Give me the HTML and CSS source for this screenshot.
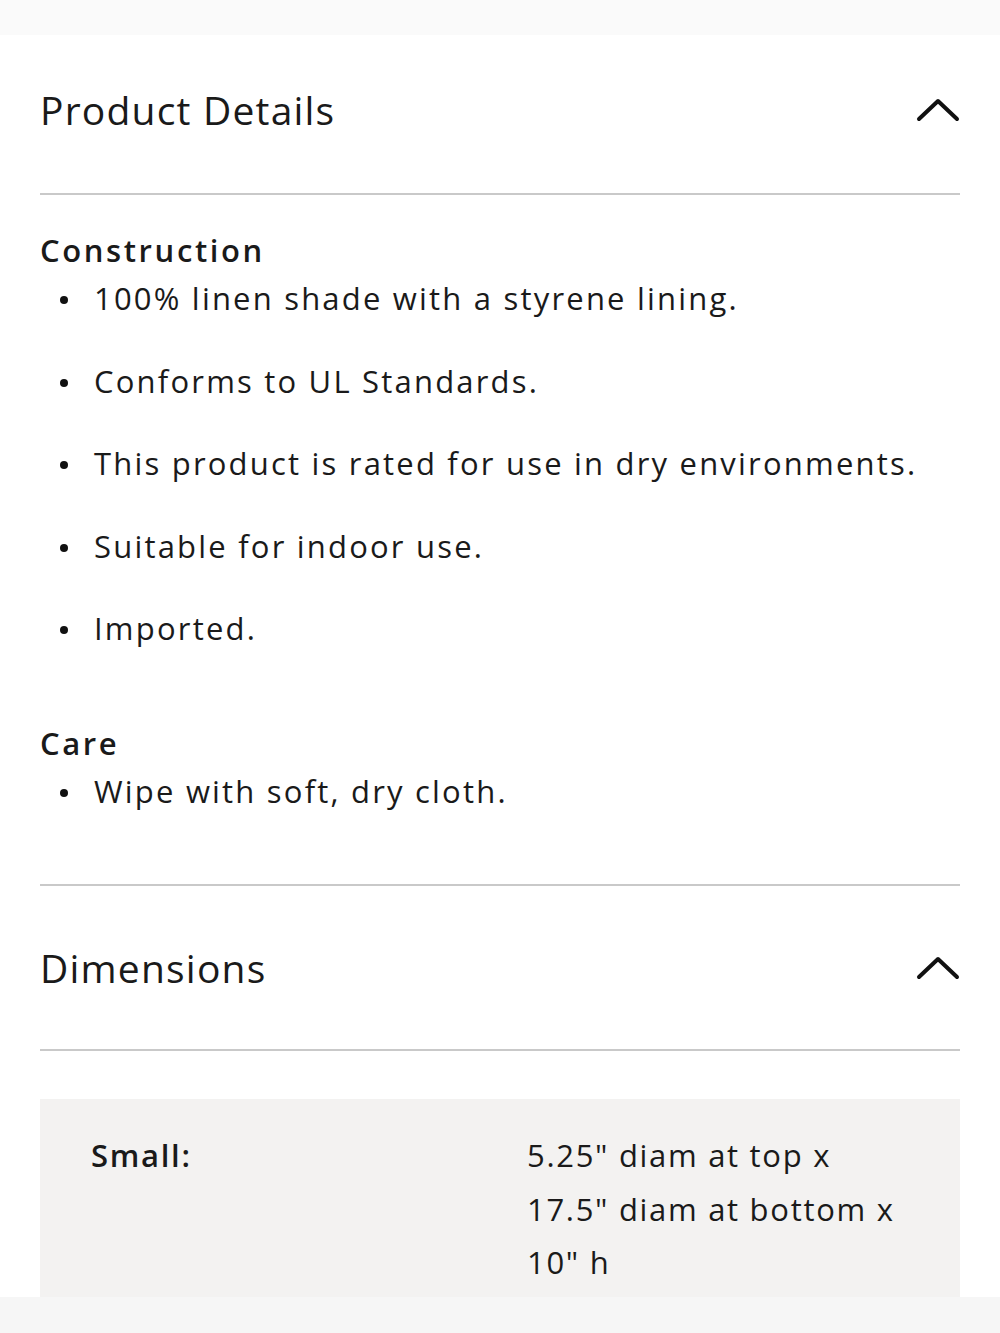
FILE: index.html
```html
<!DOCTYPE html>
<html lang="en">

<head>
    <meta charset="UTF-8">
    <meta name="viewport" content="width=device-width, initial-scale=1.0">
    <title>Product Details</title>
    <link rel="stylesheet" href="styles.css">
</head>

<body>
    <div class="top-bar"></div>

    <section class="accordion">
        <div class="acc-head">
            <h2>Product Details</h2>
            <svg class="chevron" width="44" height="24" viewBox="0 0 44 24">
                <path d="M3 21 L22 3 L41 21" />
            </svg>
        </div>
        <div class="acc-body details">
            <div class="group">
                <h3>Construction</h3>
                <ul>
                    <li>100% linen shade with a styrene lining.</li>
                    <li>Conforms to UL Standards.</li>
                    <li>This product is rated for use in dry environments.</li>
                    <li>Suitable for indoor use.</li>
                    <li>Imported.</li>
                </ul>
            </div>
            <div class="group">
                <h3>Care</h3>
                <ul>
                    <li>Wipe with soft, dry cloth.</li>
                </ul>
            </div>
        </div>
    </section>

    <section class="accordion">
        <div class="acc-head">
            <h2>Dimensions</h2>
            <svg class="chevron" width="44" height="24" viewBox="0 0 44 24">
                <path d="M3 21 L22 3 L41 21" />
            </svg>
        </div>
        <div class="dims">
            <div class="dim-row">
                <span class="dim-label">Small:</span>
                <span class="dim-value">5.25" diam at top x<br>17.5" diam at bottom x<br>10" h</span>
            </div>
        </div>
    </section>

    <div class="bottom-bar"></div>
</body>

</html>
```

FILE: styles.css
```css
body {
    margin: 0;
    font-family: "Open Sans", Lato, sans-serif;
    font-variant-ligatures: none;
    color: #1a1a1a;
    background: #fff;
}

.top-bar {
    height: 35px;
    background: #fafafa;
}

.accordion {
    padding: 0 40px;
}

.acc-head {
    height: 160px;
    padding-bottom: 8px;
    box-sizing: border-box;
    display: flex;
    justify-content: space-between;
    align-items: center;
    border-bottom: 2px solid #c9c9c9;
}

.accordion + .accordion .acc-head {
    height: 165px;
    padding-bottom: 0;
}

h2 {
    margin: 0;
    font-size: 39px;
    font-weight: 400;
    line-height: 48px;
    letter-spacing: 1.2px;
}

.chevron path {
    fill: none;
    stroke: #111;
    stroke-width: 4;
    stroke-linecap: round;
    stroke-linejoin: round;
}

.details {
    padding: 35px 0 73px;
    border-bottom: 2px solid #c9c9c9;
}

.group + .group {
    margin-top: 75px;
}

h3 {
    margin: 0;
    font-size: 31px;
    font-weight: 600;
    line-height: 40px;
    letter-spacing: 2.6px;
}

ul {
    margin: 8px 0 0;
    padding: 0;
    list-style: none;
}

li {
    display: flex;
    align-items: center;
    font-size: 31px;
    line-height: 40px;
    letter-spacing: 2.2px;
}

li::before {
    content: "";
    flex: none;
    width: 8px;
    height: 8px;
    margin: 4px 26px 0 20px;
    border-radius: 50%;
    background: #111;
}

li + li {
    margin-top: 42.5px;
}

.dims {
    margin-top: 48px;
    background: #f3f2f1;
    padding: 30px 51px 40px;
}

.dim-row {
    display: grid;
    grid-template-columns: 436px 1fr;
    font-size: 31px;
    line-height: 53.5px;
    letter-spacing: 1.7px;
}

.dim-label {
    font-weight: 600;
}

.bottom-bar {
    position: fixed;
    left: 0;
    right: 0;
    bottom: 0;
    height: 36px;
    background: rgba(246, 246, 246, 0.96);
}
```
